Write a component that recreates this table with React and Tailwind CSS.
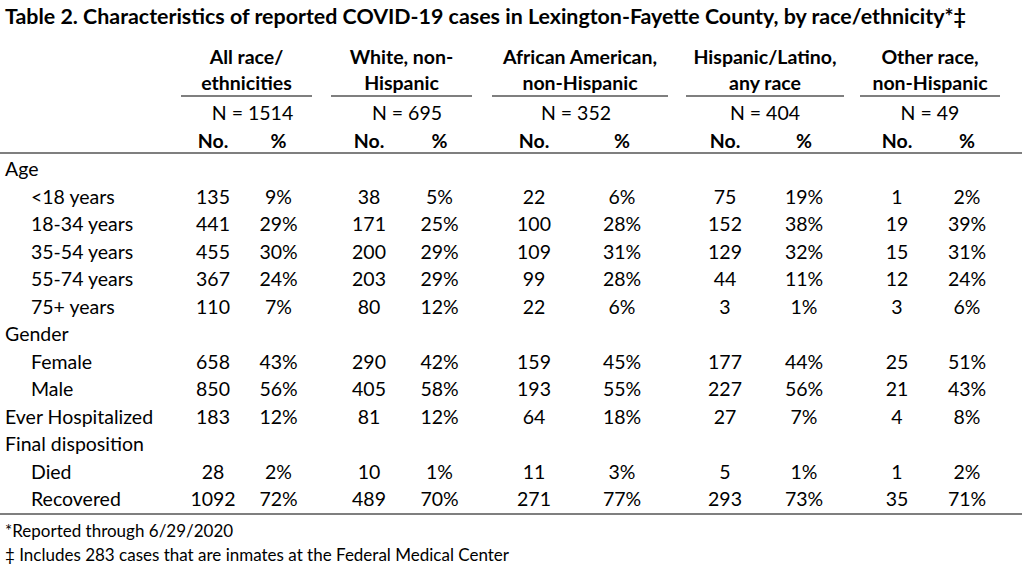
import React from "react";

const groups = [
  { top: "All race/", bottom: "ethnicities", n: "N = 1514", box: "w-[131px]", no: "w-[64px]", nClass: "pl-[12px]" },
  { top: "White, non-", bottom: "Hispanic", n: "N = 695", box: "w-[141px] ml-[19px]", no: "w-[76px]", nClass: "pl-[11px]" },
  { top: "African American,", bottom: "non-Hispanic", n: "N = 352", box: "w-[176px] ml-[20px]", no: "w-[84px]", nClass: "pr-[8px]" },
  { top: "Hispanic/Latino,", bottom: "any race", n: "N = 404", box: "w-[158px] ml-[18px]", no: "w-[78px]", nClass: "" },
  { top: "Other race,", bottom: "non-Hispanic", n: "N = 49", box: "w-[140px] ml-[16px]", no: "w-[74px]", nClass: "" },
];

const rows = [
  { label: "Age" },
  { label: "<18 years", sub: true, v: ["135", "9%", "38", "5%", "22", "6%", "75", "19%", "1", "2%"] },
  { label: "18-34 years", sub: true, v: ["441", "29%", "171", "25%", "100", "28%", "152", "38%", "19", "39%"] },
  { label: "35-54 years", sub: true, v: ["455", "30%", "200", "29%", "109", "31%", "129", "32%", "15", "31%"] },
  { label: "55-74 years", sub: true, v: ["367", "24%", "203", "29%", "99", "28%", "44", "11%", "12", "24%"] },
  { label: "75+ years", sub: true, v: ["110", "7%", "80", "12%", "22", "6%", "3", "1%", "3", "6%"] },
  { label: "Gender" },
  { label: "Female", sub: true, v: ["658", "43%", "290", "42%", "159", "45%", "177", "44%", "25", "51%"] },
  { label: "Male", sub: true, v: ["850", "56%", "405", "58%", "193", "55%", "227", "56%", "21", "43%"] },
  { label: "Ever Hospitalized", v: ["183", "12%", "81", "12%", "64", "18%", "27", "7%", "4", "8%"] },
  { label: "Final disposition" },
  { label: "Died", sub: true, v: ["28", "2%", "10", "1%", "11", "3%", "5", "1%", "1", "2%"] },
  { label: "Recovered", sub: true, v: ["1092", "72%", "489", "70%", "271", "77%", "293", "73%", "35", "71%"] },
];

function Row({ label, sub, v }) {
  return (
    <div className="flex h-[27.5px] items-center">
      <div className={`w-[181px] shrink-0 whitespace-nowrap ${sub ? "pl-[31px]" : "pl-[5px]"}`}>{label}</div>
      {groups.map((g, i) => (
        <div key={i} className={`flex shrink-0 ${g.box}`}>
          <div className={`${g.no} shrink-0 text-center`}>{v ? v[i * 2] : ""}</div>
          <div className="flex-1 text-center">{v ? v[i * 2 + 1] : ""}</div>
        </div>
      ))}
    </div>
  );
}

export default function App() {
  return (
    <div className="w-[1024px] h-[567px] bg-white text-black overflow-hidden font-['Lato',sans-serif] text-[19.5px] leading-none">
      <div className="h-[36px] flex items-center pl-[5px] pb-[3px] font-bold text-[21.4px] whitespace-nowrap">
        Table 2. Characteristics of reported COVID-19 cases in Lexington-Fayette County, by race/ethnicity*‡
      </div>

      <div className="flex pt-[8px]">
        <div className="w-[181px] shrink-0" />
        {groups.map((g, i) => (
          <div key={i} className={`shrink-0 ${g.box}`}>
            <div className="font-bold text-center border-b-2 border-[#7f7f7f]">
              <div className="h-[26px] flex items-center justify-center whitespace-nowrap">{g.top}</div>
              <div className="h-[25px] flex items-center justify-center whitespace-nowrap">{g.bottom}</div>
            </div>
            <div className={`h-[32px] flex items-center justify-center ${g.nClass}`}>{g.n}</div>
            <div className="h-[23px] flex items-center font-bold">
              <div className={`${g.no} shrink-0 text-center`}>No.</div>
              <div className="flex-1 text-center">%</div>
            </div>
          </div>
        ))}
      </div>

      <div className="w-[1022px] border-t-2 border-[#7f7f7f] pt-[1px]">
        {rows.map((r, i) => (
          <Row key={i} {...r} />
        ))}
      </div>

      <div className="w-[1022px] border-t-2 border-[#7f7f7f] pl-[5px] pt-[4px] text-[17px]">
        <div className="h-[24px] flex items-center">*Reported through 6/29/2020</div>
        <div className="h-[24px] flex items-center">‡ Includes 283 cases that are inmates at the Federal Medical Center</div>
      </div>
    </div>
  );
}
